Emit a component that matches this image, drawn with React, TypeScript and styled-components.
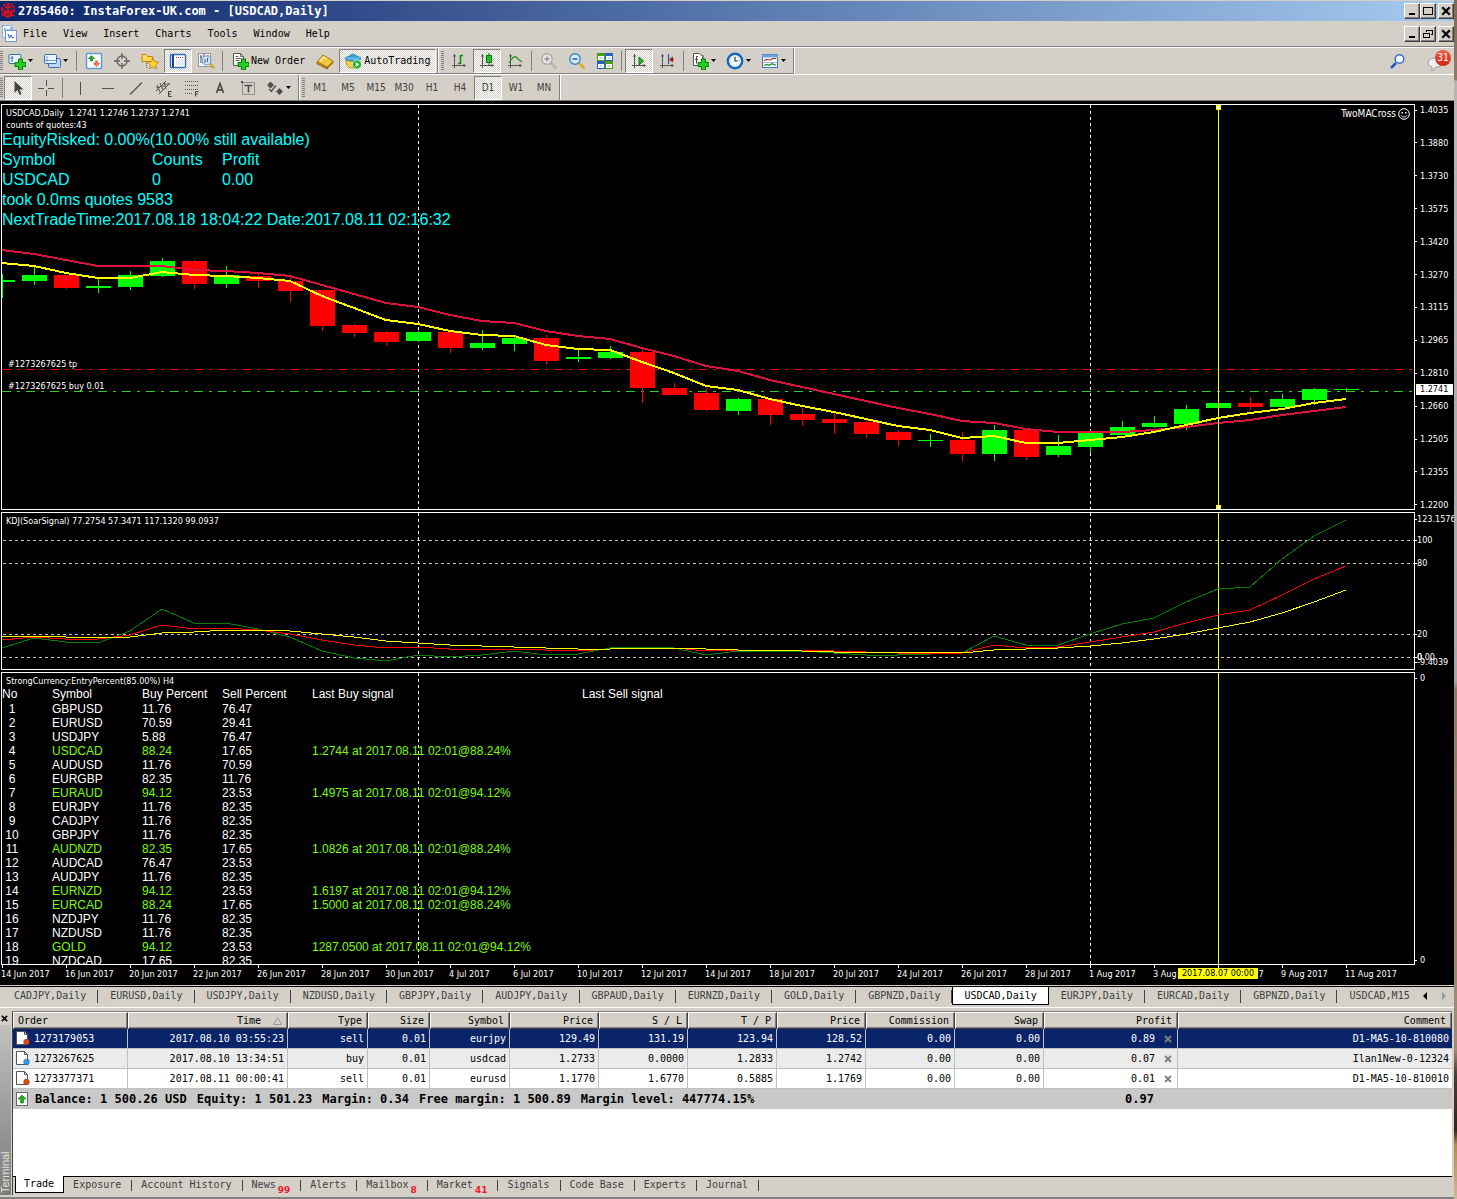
import React from "react";
import styled, { createGlobalStyle, css } from "styled-components";

const FACE = "#d4d0c8";
const MONO = '"DejaVu Sans Mono", "Liberation Mono", monospace';
const SMALL = '"DejaVu Sans Condensed", "DejaVu Sans", sans-serif';
const ARIAL = '"Liberation Sans", Arial, sans-serif';

const GlobalStyle = createGlobalStyle`
  *, *::before, *::after { box-sizing: border-box; }
  body { margin: 0; background: ${FACE}; font: 10px/12px ${MONO}; color: #000; }
  button { margin: 0; padding: 0; border: 0; background: none; font: inherit; color: inherit; cursor: default; }
  svg { display: block; flex: none; }
`;

/* ---------- frame ---------- */

const Desktop = styled.div`
  display: flex;
  min-height: 100vh;
  background: linear-gradient(#7d6a55 0, #8f7c66 80px, #b7b5b3 81px, #a9a7a6 680px, #8d7a64 690px, #a08c72 1050px, #4a3c34 1075px, #33261c 1130px, #b58b4c 1145px, #cdb899 1199px);
`;

const Frame = styled.main`
  display: flex;
  flex: 1;
  min-width: 0;
  flex-direction: column;
  margin-right: 3px;
  padding-top: 1px;
  background: ${FACE};
`;

const TitleBar = styled.header`
  display: flex;
  align-items: center;
  height: 20px;
  background: linear-gradient(90deg, #0a246a, #a6caf0);
`;

const Title = styled.h1`
  flex: 1;
  margin: 0 0 0 2px;
  color: #fff;
  font: bold 12px/20px ${MONO};
`;

const MenuBar = styled.nav`
  display: flex;
  align-items: center;
  height: 26px;
  border-bottom: 1px solid #808080;
`;

const MenuItem = styled.button`
  padding: 0 8px;
`;

const MenuIcon = styled.span`
  padding-left: 1px;
  margin-right: -2px;
`;

const Spring = styled.span`
  flex: 1;
`;

const WinButtons = styled.div`
  display: flex;
`;

const WinButton = styled.button<{ $gap?: boolean }>`
  display: flex;
  align-items: center;
  justify-content: center;
  width: 16px;
  height: 16px;
  margin-left: ${(p) => (p.$gap ? 2 : 0)}px;
  background: ${FACE};
  border: 1px solid;
  border-color: #fff #404040 #404040 #fff;
  box-shadow: inset -1px -1px 0 #808080;
`;

/* ---------- toolbars ---------- */

const ToolRow = styled.div<{ $last?: boolean }>`
  display: flex;
  height: 27px;
  border-top: 1px solid #fff;
  ${(p) => p.$last && css`
    border-bottom: 1px solid #808080;
  `}
`;

const ToolBar = styled.div<{ $under?: boolean }>`
  display: flex;
  align-items: center;
  padding-right: 1px;
  border-right: 1px solid #808080;
  border-bottom: ${(p) => (p.$under ? "1px solid #808080" : "0")};
  box-shadow: 1px 0 0 #fff;
  & + & { padding-left: 3px; }
`;

const Grip = styled.span`
  width: 3px;
  height: 19px;
  margin-right: 1px;
  background: repeating-linear-gradient(#808080 0 1px, ${FACE} 1px 2px);
`;

const Divider = styled.span`
  width: 1px;
  height: 20px;
  margin: 0 3px 0 2px;
  background: #808080;
`;

const pressed = css`
  border-color: #808080 #fff #fff #808080;
  background: conic-gradient(#fff 25%, ${FACE} 0 50%, #fff 0 75%, ${FACE} 0) 0 0 / 2px 2px;
`;

const Tool = styled.button<{ $wide?: boolean; $pressed?: boolean }>`
  display: flex;
  align-items: center;
  justify-content: ${(p) => (p.$wide ? "flex-start" : "center")};
  gap: 2px;
  width: ${(p) => (p.$wide ? 35 : 28)}px;
  height: 24px;
  padding-left: ${(p) => (p.$wide ? 3 : 0)}px;
  border: 1px solid transparent;
  font: 10px/12px ${SMALL};
  color: #404040;
  ${(p) => p.$pressed && pressed}
`;

const TextTool = styled.button<{ $pressed?: boolean }>`
  display: flex;
  align-items: center;
  gap: 2px;
  height: 24px;
  padding: 0 5px 0 4px;
  border: 1px solid transparent;
  ${(p) => p.$pressed && pressed}
`;

const AlertTools = styled.div`
  display: flex;
  align-items: center;
  gap: 14px;
  margin-left: auto;
  padding-right: 3px;
`;

const AlertButton = styled.button`
  position: relative;
  width: 24px;
  height: 24px;
`;

const AlertCount = styled.span`
  position: absolute;
  top: 1px;
  right: 0;
  width: 16px;
  height: 16px;
  border-radius: 8px;
  background: linear-gradient(#e8604a, #d82010);
  color: #fff;
  font: 10px/16px ${SMALL};
  text-align: center;
`;

/* ---------- chart ---------- */

const ChartArea = styled.section`
  display: flex;
  flex-direction: column;
  gap: 2px;
  padding: 3px 0 0 1px;
  background: #000;
  color: #fff;
  font: 9px/12px ${SMALL};
`;

const PaneRow = styled.div<{ $h: number }>`
  display: flex;
  height: ${(p) => p.$h}px;
`;

const Pane = styled.div`
  display: grid;
  flex: 1;
  min-width: 0;
  border: 1px solid #fff;
  overflow: hidden;
  > * { grid-area: 1 / 1; min-width: 0; min-height: 0; }
`;

const Plot = styled.svg`
  width: 100%;
  height: 100%;
  shape-rendering: crispEdges;
`;

const Overlay = styled.div`
  display: flex;
  flex-direction: column;
  align-items: flex-start;
  overflow: hidden;
  white-space: pre;
`;

const PaneNote = styled.div`
  padding: 2px 0 0 4px;
  & + & { padding-top: 0; }
`;

const Cyan = styled.div`
  display: grid;
  grid-template-columns: 150px 70px auto;
  margin-top: -1px;
  font: 16px/20px ${ARIAL};
  color: #00ffff;
`;

const CyanLine = styled.span`
  grid-column: 1 / -1;
`;

const ExpertName = styled.div`
  display: flex;
  align-items: center;
  gap: 2px;
  justify-self: end;
  align-self: start;
  padding: 3px 4px 0 0;
  font-size: 10px;
`;

const OrderNotes = styled.div`
  display: flex;
  flex-direction: column;
  gap: 10px;
  align-self: end;
  padding: 0 0 117px 6px;
`;

const Axis = styled.div`
  position: relative;
  display: flex;
  flex-direction: column;
  justify-content: space-between;
  width: 39px;
  padding-top: 1px;
  overflow: hidden;
  line-height: 10px;
`;

const Tick = styled.div`
  display: flex;
  align-items: center;
  gap: 3px;
  &::before { content: ""; width: 2px; height: 1px; background: #fff; }
`;

const FloatTick = styled(Tick)`
  position: absolute;
  left: 0;
  gap: 0;
`;

const PriceTag = styled.div`
  position: absolute;
  left: 1px;
  width: 37px;
  height: 11px;
  padding-left: 4px;
  background: #fff;
  color: #000;
  line-height: 11px;
`;

const DateAxis = styled.div`
  position: relative;
  display: flex;
  height: 20px;
  margin-top: -2px;
  overflow: hidden;
`;

const DateCell = styled.div`
  flex: none;
  width: 64px;
  white-space: nowrap;
  &::before { content: ""; display: block; width: 1px; height: 3px; margin-left: 1px; background: #fff; }
`;

const DateTag = styled.div`
  position: absolute;
  top: 3px;
  left: 1177px;
  width: 80px;
  height: 11px;
  background: #ff0;
  color: #000;
  line-height: 11px;
  text-align: center;
  white-space: nowrap;
`;

const SignalTable = styled.table`
  table-layout: fixed;
  width: 850px;
  border-collapse: collapse;
  font: 12px/14px ${ARIAL};
  th, td { padding: 0; font-weight: normal; text-align: left; }
  th { line-height: 15px; }
`;

const SignalRow = styled.tr<{ $hot?: boolean }>`
  color: ${(p) => (p.$hot ? "#7cfc00" : "#fff")};
  td:first-child { width: 20px; padding-right: 30px; text-align: center; color: #fff; }
  td:nth-child(4) { color: #fff; }
`;

/* ---------- chart tabs ---------- */

const ChartTabs = styled.nav`
  display: flex;
  height: 22px;
  padding-left: 2px;
  margin-top: 1px;
  border-top: 1px solid #000;
  border-bottom: 1px solid #fff;
  overflow: hidden;
`;

const ChartTab = styled.button<{ $active?: boolean }>`
  position: relative;
  height: 18px;
  padding: 0 12px;
  color: #404040;
  white-space: nowrap;
  &::after { content: ""; position: absolute; right: 0; top: 3px; width: 1px; height: 13px; background: #404040; }
  &:last-of-type::after { display: none; }
  ${(p) => p.$active && css`
    margin-top: -1px;
    height: 19px;
    padding: 0 11px;
    border: 1px solid #000;
    border-top-color: #fff;
    background: #fff;
    color: #000;
    &::after { display: none; }
  `}
`;

const TabScroll = styled.div`
  display: flex;
  align-items: center;
  gap: 13px;
  height: 17px;
  margin-left: auto;
  padding-right: 7px;
`;

/* ---------- terminal ---------- */

const Terminal = styled.section`
  display: flex;
  flex: 1;
  min-height: 187px;
  margin-top: 3px;
  padding: 0 2px 2px 0;
  border-bottom: 2px solid #808080;
`;

const SideBar = styled.div`
  display: flex;
  flex-direction: column;
  align-items: center;
  width: 12px;
`;

const SideClose = styled.button`
  width: 12px;
  height: 14px;
  padding: 2px 0 2px 1px;
`;

const SideTitle = styled.h2`
  flex: 1;
  width: 11px;
  margin: 0 1px 0 0;
  padding-top: 2px;
  background: linear-gradient(#7c7c7c, #c0c0c0);
  color: #e4e1da;
  font: 11px/11px ${ARIAL};
  writing-mode: vertical-rl;
  transform: rotate(180deg);
`;

const TermBody = styled.div`
  display: flex;
  flex: 1;
  flex-direction: column;
  min-width: 0;
  border-top: 1px solid #808080;
  border-left: 1px solid #404040;
  background: #fff;
`;

const Orders = styled.table`
  width: 100%;
  table-layout: fixed;
  border-collapse: separate;
  border-spacing: 0;
  th, td { padding: 0 3px; text-align: right; white-space: nowrap; }
`;

const HeadCell = styled.th`
  height: 17px;
  background: ${FACE};
  border: 1px solid;
  border-color: #fff #404040 #404040 #fff;
  box-shadow: inset -1px -1px 0 #808080;
  font-weight: normal;
  && { padding-right: 5px; }
  &&:first-child { text-align: left; padding-left: 4px; }
`;

const HeadFlex = styled.span`
  display: flex;
  align-items: center;
  justify-content: flex-end;
  gap: 12px;
`;

const OrderRow = styled.tr<{ $tone: string }>`
  background: ${(p) => p.$tone};
  color: ${(p) => (p.$tone === "#0a246a" ? "#fff" : "#000")};
  td { height: 20px; border-right: 1px solid #c0c0c0; border-bottom: 1px solid #c0c0c0; }
  td:last-child { border-right: 0; }
`;

const IconText = styled.span`
  display: flex;
  align-items: center;
  gap: 4px;
`;

const ProfitCell = styled.span`
  display: flex;
  align-items: center;
  justify-content: flex-end;
  gap: 9px;
  padding-right: 2px;
`;

const Summary = styled.tr`
  background: #c8c8c8;
  font: bold 12px/20px ${MONO};
  td { height: 20px; }
  td:nth-child(2) { padding-right: 24px; }
`;

const SummaryItems = styled.span`
  display: flex;
  align-items: center;
  gap: 10px;
  svg { margin-right: -3px; }
`;

const TermTabs = styled.nav`
  display: flex;
  height: 19px;
  margin-top: auto;
  padding-left: 2px;
  border-top: 1px solid #000;
  background: ${FACE};
`;

const TermTab = styled.button<{ $active?: boolean }>`
  position: relative;
  display: flex;
  align-items: center;
  height: 16px;
  padding: 0 11px 0 9px;
  color: #404040;
  white-space: nowrap;
  &::after { content: ""; position: absolute; right: 0; top: 3px; width: 1px; height: 11px; background: #404040; }
  ${(p) => p.$active && css`
    margin-top: -1px;
    height: 17px;
    padding: 0 9px 0 8px;
    border: 1px solid #000;
    border-top: 0;
    background: #fff;
    color: #000;
    &::after { display: none; }
  `}
`;

const Badge = styled.sub`
  align-self: flex-end;
  margin: 0 0 -2px 2px;
  color: #f01828;
  font: bold 9px/10px "DejaVu Sans", sans-serif;
`;

/* ---------- icons ---------- */

const axes = <path d="M4.500 2v14M2 13.500h14M3 4h3M14 12v3" stroke="#555" fill="none" />;
const glass = (ring: string, fill: string, handle: string) => (
  <>
    <path d="M10.500 10.500l5 5" stroke={handle} strokeWidth="3" strokeLinecap="round" />
    <circle cx="7" cy="7" r="5.200" fill={fill} stroke={ring} strokeWidth="1.400" />
  </>
);
const addMark = <path d="M7 10.500h3.500v-3.500h4v3.500h3.500v4h-3.500v3.500h-4v-3.500h-3.500z" fill="#1fd01f" stroke="#0a7a0a" />;

const icons: Record<string, React.ReactNode> = {
  newChart: <><rect x="1" y="2.500" width="12" height="9" rx="1" fill="#eaf4ff" stroke="#3b6fa8" /><path d="M4 4v6M2.500 6h3" stroke="#3b6fa8" />{addMark}</>,
  profiles: <><rect x="5.500" y="6.500" width="12" height="9" rx="1" fill="#bcd8f4" stroke="#3b6fa8" /><rect x="1.500" y="2.500" width="12" height="9" rx="1" fill="#eaf4ff" stroke="#3b6fa8" /><path d="M4 4v6M2 8.500h11" stroke="#7aa2cc" /></>,
  market: <><rect x="1.500" y="1.500" width="15" height="15" rx="1" fill="#fff" stroke="#5b9bd8" strokeWidth="1.500" /><path d="M6.500 3.500l3 3h-2v2.500h-2v-2.500h-2z" fill="#1fae1f" stroke="#0a7a0a" strokeWidth=".6" /><path d="M11.500 14.500l3-3h-2v-2.500h-2v2.500h-2z" fill="#ff7a45" stroke="#c03a10" strokeWidth=".6" /></>,
  target: <g fill="none" stroke="#606060" strokeWidth="1.300"><circle cx="9" cy="9" r="5" /><path d="M9 1v6M9 11v6M1 9h6M11 9h6" /></g>,
  navigator: <><path d="M1 2.500h4l1.500 2h5v5h-10.500z" fill="#ffd95a" stroke="#b8860b" /><path d="M5.500 11v5" stroke="#555" strokeDasharray="1 1" /><path d="M12 6l1.700 3.600 4 .5-3 2.700.8 4-3.500-2-3.500 2 .8-4-3-2.700 4-.5z" fill="#ffd430" stroke="#b8780b" strokeWidth=".8" /></>,
  terminal: <><rect x="1.500" y="2.500" width="15" height="13" rx="1" fill="#fff" stroke="#2c6cb8" strokeWidth="1.400" /><path d="M4 3v12" stroke="#14468c" strokeWidth="2" /><path d="M7 5.500h8" stroke="#e03020" strokeDasharray="1 1" /><path d="M7 8h8M7 10h8M7 12h8" stroke="#cfd8ea" /></>,
  tester: <><rect x="1.500" y="1.500" width="12" height="13" fill="#f4f4f4" stroke="#999" /><path d="M4 3v8M7 2v4M11 3v4M3 5h2" stroke="#557" /><path d="M13 12l4 4" stroke="#d9a520" strokeWidth="2.500" /><circle cx="9.500" cy="8.500" r="4.500" fill="#cfe6fa" stroke="#6c9cc8" strokeWidth="1.200" /><path d="M8 7v4M10.500 6v4" stroke="#557" /></>,
  newOrder: <><path d="M2.500 1.500h7l3 3v9h-10z" fill="#fff" stroke="#555" /><path d="M9.500 1.500v3h3M4.500 4.500h3M4.500 6.500h6M4.500 8.500h4" fill="none" stroke="#666" />{addMark}</>,
  metaEditor: <><path d="M1 10l6-7 10 6-6 6z" fill="#f3c840" stroke="#a8740c" /><path d="M1 10v2l10 5v-2zM11 15v2l6-6v-2" fill="#c98e18" stroke="#8a5c0c" strokeWidth=".7" /><path d="M4 9l4-4 3 2" fill="none" stroke="#fff3b0" strokeWidth="1.300" /></>,
  auto: <><path d="M2 8c0 7 3 8 7 8s6-2 6-5z" fill="#f5cf48" stroke="#a8800c" strokeWidth=".8" /><path d="M5 6c0-5 8-5 8 0z" fill="#58b4ea" stroke="#2078b0" strokeWidth=".8" /><ellipse cx="9" cy="6.500" rx="8" ry="2.500" fill="#58b4ea" stroke="#2078b0" strokeWidth=".8" /><circle cx="13" cy="12.500" r="4.500" fill="#22b033" stroke="#fff" strokeWidth=".6" /><path d="M11.700 10v5l3.600-2.500z" fill="#fff" /></>,
  bars: <>{axes}<path d="M10.500 3v9M10.500 3.500h2.500M8 11.500h2.500" stroke="#128a12" strokeWidth="1.600" /></>,
  candles: <>{axes}<path d="M11 1v12" stroke="#0a7a0a" /><rect x="8.500" y="3.500" width="5" height="7" fill="#25c225" stroke="#0a7a0a" /></>,
  line: <>{axes}<path d="M3 11c4-7 7-8 9-4l4 3" fill="none" stroke="#2a9a2a" strokeWidth="1.400" /></>,
  zoomIn: <>{glass("#a8a8a8", "#e8e8e8", "#b8b8b8")}<path d="M4.500 7h5M7 4.500v5" stroke="#909090" strokeWidth="1.500" /></>,
  zoomOut: <>{glass("#3a84c8", "#d4ecfc", "#dcb030")}<path d="M4.500 7h5" stroke="#2060a0" strokeWidth="1.500" /></>,
  tile: <><rect x="1" y="1" width="8" height="8" fill="#4a9c10" /><rect x="9" y="1" width="8" height="8" fill="#2c5cc8" /><rect x="1" y="9" width="8" height="8" fill="#2c5cc8" /><rect x="9" y="9" width="8" height="8" fill="#4a9c10" /><path d="M2 4h6v4h-6zM10 4h6v4h-6zM2 12h6v4h-6zM10 12h6v4h-6z" fill="#fff" /><path d="M3.500 6h3M11.500 6h3M3.500 14h3M11.500 14h3" stroke="#9ab" /></>,
  scroll: <>{axes}<path d="M9 5v8l4.500-4z" fill="#22b022" stroke="#0a7a0a" /></>,
  shift: <>{axes}<path d="M10.500 2v10" stroke="#2060b0" strokeWidth="1.300" /><path d="M12 7.500h4M14.500 5l-3 2.500 3 2.500z" fill="#d03a10" stroke="#a02a08" /></>,
  indicators: <><path d="M4.500 3.500h8v10h-8z" fill="#fff" stroke="#888" /><path d="M2.500 1.500h6l3 3v9h-9z" fill="#fff" stroke="#555" /><path d="M7 4.500h-1.500v7M4 7.500h3" stroke="#444" fill="none" />{addMark}</>,
  periods: <><circle cx="9" cy="9" r="7.200" fill="#f4faff" stroke="#1468c0" strokeWidth="2.400" /><circle cx="9" cy="9" r="4.500" fill="none" stroke="#99b4cc" strokeDasharray="1 1.600" /><path d="M9 5v4h3" fill="none" stroke="#333" strokeWidth="1.200" /></>,
  templates: <><rect x="1.500" y="2.500" width="15" height="13" fill="#fff" stroke="#3b78b8" /><path d="M1 4h16" stroke="#6aa4dc" strokeWidth="3" /><path d="M3 8.500l3-1 3 .5 3-1.500h3" fill="none" stroke="#a02818" strokeWidth="1.200" /><path d="M2 10.500h14" stroke="#9ab8d8" /><path d="M3 13.500l3-1 2 .8 3-1.600 4 1.600" fill="none" stroke="#1a8a2a" strokeWidth="1.200" /></>,
  cursor: <path d="M5.500 2v12l3-3 2 5 2-1-2-4.500h4z" fill="#444" />,
  cross: <path d="M9.500 1v6M9.500 11v6M1 9.500h6M11 9.500h6" stroke="#505050" />,
  vline: <path d="M9.500 3v13" stroke="#505050" />,
  hline: <path d="M3 9.500h12" stroke="#505050" />,
  trend: <path d="M3 15.500l12-12" stroke="#505050" strokeWidth="1.200" />,
  channel: <><path d="M1 12l10-10M4 15l11-11M2 6l3 7M5 4l3 7M9 3l2 7M1 9l4-1M6 7h4M10 5h5" stroke="#505050" fill="none" /><path d="M16.500 12.500h-3v5h3M13.500 15h2.500" stroke="#404040" fill="none" /></>,
  fibo: <><path d="M2 2.500h13M2 6.500h13M2 10.500h13M2 14.500h8" stroke="#505050" strokeDasharray="1 1" /><path d="M15.500 12.500h-3v5M12.500 15h2.500" stroke="#404040" fill="none" /></>,
  text: <path d="M5.500 14l3.500-9.500 3.500 9.500M6.800 11h4.500" fill="none" stroke="#505050" strokeWidth="1.800" />,
  label: <><rect x="3.500" y="3.500" width="12" height="12" fill="none" stroke="#505050" strokeDasharray="1 1" /><path d="M5.500 6.500h8M9.500 6.500v7" stroke="#505050" strokeWidth="1.700" /><rect x="2" y="2" width="2" height="2" fill="#505050" /></>,
  shapes: <><path d="M1 6l3.500-3.500 3.500 3.500-3.500 3.500zM10 12.500l3.500-3.500 3.500 3.500-3.500 3.500z" fill="#505050" /><path d="M3 10l3 3M5 12.500l5-6" stroke="#505050" strokeWidth="1.300" /></>,
  search: <><path d="M7 11l-5 5" stroke="#2858c0" strokeWidth="2.500" /><circle cx="10.500" cy="7" r="4.300" fill="#f4f8ff" stroke="#3a6cd0" strokeWidth="1.500" /></>,
};

const Icon = ({ name }: { name: string }) => (
  <svg width="18" height="18" viewBox="0 0 18 18" aria-hidden="true">{icons[name]}</svg>
);

const Caret = () => (
  <svg width="5" height="3" viewBox="0 0 5 3" aria-hidden="true"><path d="M0 0h5l-2.500 3z" fill="#000" /></svg>
);

const Cross = ({ color = "#000", size = 8 }: { color?: string; size?: number }) => (
  <svg width={size} height={size} viewBox="0 0 8 8" aria-hidden="true"><path d="M1 1l6 6M7 1l-6 6" stroke={color} strokeWidth="1.900" /></svg>
);

const Logo = () => (
  <svg width="16" height="18" viewBox="0 0 16 18" aria-hidden="true">
    <g fill="none" stroke="#f01010" strokeWidth="1.500">
      <path d="M8 1v15M3 4l2-1.500M13 4l-2-1.500M1 8h3M15 8h-3M2 14l3-2M14 14l-3-2M4.500 6.500c2-3 5-3 7 0M4 9c0 3 2 3 2 6M12 9c0 3-2 3-2 6M6 8v4M10 8v4" />
      <circle cx="8" cy="8" r="6.500" strokeWidth="1.200" strokeDasharray="3 2" />
    </g>
  </svg>
);

const DocLogo = () => (
  <svg width="16" height="19" viewBox="0 0 16 19" aria-hidden="true">
    <rect x="1.500" y="1.500" width="10" height="12" fill="#eef5ff" stroke="#6a9ae0" strokeDasharray="2 1" />
    <path d="M4 7v-3M7 5v4M10 3v4" stroke="#3a6ad0" />
    <rect x="4.500" y="6.500" width="11" height="11" fill="#fff" stroke="#6a9ae0" />
    <path d="M7 10l1.500 4 1.500-3 1.500 3 1.500-1" fill="none" stroke="#2a5ad0" />
  </svg>
);

const DocIcon = ({ dot }: { dot: string }) => (
  <svg width="14" height="15" viewBox="0 0 14 15" aria-hidden="true">
    <path d="M.5.5h8l3 3v10h-11z" fill="#fff" stroke="#555" />
    <path d="M8.500.5v3h3" fill="none" stroke="#555" />
    <circle cx="10.500" cy="11" r="3" fill={dot} stroke="#0004" strokeWidth=".7" />
  </svg>
);

/* ---------- data ---------- */

const menus = ["File", "View", "Insert", "Charts", "Tools", "Window", "Help"];
const periods = ["M1", "M5", "M15", "M30", "H1", "H4", "D1", "W1", "MN"];
const prices = ["1.4035", "1.3880", "1.3730", "1.3575", "1.3420", "1.3270", "1.3115", "1.2965", "1.2810", "1.2660", "1.2505", "1.2355", "1.2200"];
const dates = ["14 Jun 2017", "16 Jun 2017", "20 Jun 2017", "22 Jun 2017", "26 Jun 2017", "28 Jun 2017", "30 Jun 2017", "4 Jul 2017", "6 Jul 2017", "10 Jul 2017", "12 Jul 2017", "14 Jul 2017", "18 Jul 2017", "20 Jul 2017", "24 Jul 2017", "26 Jul 2017", "28 Jul 2017", "1 Aug 2017", "3 Aug 2017", "7 Aug 2017", "9 Aug 2017", "11 Aug 2017"];

// [rising, wick top, body top, body bottom, wick bottom]
const candles: [number, number, number, number, number][] = [
  [1, 274, 280, 282, 298], [1, 267, 275, 281, 285], [0, 275, 275, 288, 289], [1, 278, 286, 288, 293], [1, 271, 275, 287, 290],
  [1, 258, 261, 276, 277], [0, 260, 261, 284, 289], [1, 266, 275, 284, 288], [0, 272, 276, 281, 288], [0, 275, 281, 291, 302],
  [0, 290, 290, 326, 331], [0, 324, 325, 333, 337], [0, 331, 332, 342, 346], [1, 331, 332, 341, 342], [0, 332, 332, 348, 353],
  [1, 330, 343, 348, 350], [1, 337, 338, 344, 351], [0, 335, 338, 361, 365], [1, 349, 357, 359, 362], [1, 346, 352, 358, 359],
  [0, 347, 352, 388, 403], [0, 383, 388, 395, 395], [0, 388, 393, 410, 411], [1, 398, 399, 411, 415], [0, 399, 399, 415, 425],
  [0, 408, 414, 420, 426], [0, 413, 419, 423, 434], [0, 420, 422, 434, 438], [0, 430, 432, 440, 446], [1, 434, 440, 441, 447],
  [0, 432, 440, 454, 461], [1, 425, 430, 454, 461], [0, 430, 430, 457, 460], [1, 435, 446, 455, 457], [1, 430, 433, 447, 453],
  [1, 421, 427, 435, 435], [1, 416, 423, 427, 428], [1, 405, 409, 424, 430], [1, 403, 403, 408, 408], [0, 397, 403, 407, 410],
  [1, 394, 399, 407, 407], [1, 388, 389, 400, 405], [1, 388, 389, 390, 392],
];
const fastMa = [263, 266, 273, 278, 278, 272, 275, 276, 278, 281, 296, 308, 320, 324, 331, 335, 336, 345, 349, 350, 362, 373, 386, 390, 399, 406, 412, 419, 426, 430, 438, 436, 443, 443, 440, 437, 432, 425, 418, 413, 409, 403, 399];
const slowMa = [250, 254, 260, 266, 266, 266, 270, 271, 273, 276, 285, 294, 303, 307, 315, 321, 323, 331, 336, 339, 348, 356, 366, 371, 380, 387, 394, 401, 408, 414, 421, 423, 429, 432, 432, 432, 430, 427, 423, 420, 415, 411, 407];
const kdjJ = [648, 638, 642, 643, 631, 609, 623, 623, 629, 637, 651, 658, 661, 655, 657, 655, 651, 655, 654, 648, 647, 648, 655, 651, 651, 651, 653, 655, 655, 654, 653, 636, 645, 645, 634, 624, 618, 602, 589, 587, 559, 536, 520];
const kdjK = [640, 637, 639, 639, 635, 625, 629, 628, 630, 634, 640, 645, 648, 647, 649, 649, 649, 650, 651, 649, 648, 648, 651, 650, 650, 650, 651, 652, 653, 654, 653, 645, 648, 647, 642, 637, 632, 623, 615, 610, 595, 579, 566];
const kdjD = [636, 636, 637, 638, 637, 633, 632, 630, 630, 631, 634, 637, 641, 643, 645, 646, 647, 648, 649, 649, 648, 648, 649, 650, 650, 651, 652, 652, 652, 652, 653, 650, 649, 648, 646, 643, 639, 634, 628, 622, 613, 602, 590];

const xOf = (i: number) => 2 + i * 32;
const points = (ys: number[]) => ys.map((y, i) => `${xOf(i)},${y}`).join(" ");

const kdjLabels: [string, number][] = [["123.1576", 519], ["100", 540], ["80", 563], ["20", 634], ["0", 657], ["0.00", 657], ["-9.4039", 662]];

const signals: [string, string, string, string?][] = [
  ["GBPUSD", "11.76", "76.47"], ["EURUSD", "70.59", "29.41"], ["USDJPY", "5.88", "76.47"],
  ["USDCAD", "88.24", "17.65", "1.2744 at 2017.08.11 02:01@88.24%"],
  ["AUDUSD", "11.76", "70.59"], ["EURGBP", "82.35", "11.76"],
  ["EURAUD", "94.12", "23.53", "1.4975 at 2017.08.11 02:01@94.12%"],
  ["EURJPY", "11.76", "82.35"], ["CADJPY", "11.76", "82.35"], ["GBPJPY", "11.76", "82.35"],
  ["AUDNZD", "82.35", "17.65", "1.0826 at 2017.08.11 02:01@88.24%"],
  ["AUDCAD", "76.47", "23.53"], ["AUDJPY", "11.76", "82.35"],
  ["EURNZD", "94.12", "23.53", "1.6197 at 2017.08.11 02:01@94.12%"],
  ["EURCAD", "88.24", "17.65", "1.5000 at 2017.08.11 02:01@88.24%"],
  ["NZDJPY", "11.76", "82.35"], ["NZDUSD", "11.76", "82.35"],
  ["GOLD", "94.12", "23.53", "1287.0500 at 2017.08.11 02:01@94.12%"],
  ["NZDCAD", "17.65", "82.35"],
];

const chartTabs = ["CADJPY,Daily", "EURUSD,Daily", "USDJPY,Daily", "NZDUSD,Daily", "GBPJPY,Daily", "AUDJPY,Daily", "GBPAUD,Daily", "EURNZD,Daily", "GOLD,Daily", "GBPNZD,Daily", "USDCAD,Daily", "EURJPY,Daily", "EURCAD,Daily", "GBPNZD,Daily", "USDCAD,M15"];

const columns: [string, number?][] = [["Order", 115], ["Time", 160], ["Type", 80], ["Size", 62], ["Symbol", 80], ["Price", 89], ["S / L", 89], ["T / P", 89], ["Price", 89], ["Commission", 89], ["Swap", 89], ["Profit", 134], ["Comment"]];
const orders = [
  { tone: "#0a246a", dot: "#e04818", cells: ["1273179053", "2017.08.10 03:55:23", "sell", "0.01", "eurjpy", "129.49", "131.19", "123.94", "128.52", "0.00", "0.00", "0.89", "D1-MA5-10-810080"] },
  { tone: "#ebebeb", dot: "#2a98e8", cells: ["1273267625", "2017.08.10 13:34:51", "buy", "0.01", "usdcad", "1.2733", "0.0000", "1.2833", "1.2742", "0.00", "0.00", "0.07", "Ilan1New-0-12324"] },
  { tone: "#ffffff", dot: "#e04818", cells: ["1273377371", "2017.08.11 00:00:41", "sell", "0.01", "eurusd", "1.1770", "1.6770", "0.5885", "1.1769", "0.00", "0.00", "0.01", "D1-MA5-10-810010"] },
];
const summary = ["Balance: 1 500.26 USD", "Equity: 1 501.23", "Margin: 0.34", "Free margin: 1 500.89", "Margin level: 447774.15%"];
const termTabs: [string, string?][] = [["Trade"], ["Exposure"], ["Account History"], ["News", "99"], ["Alerts"], ["Mailbox", "8"], ["Market", "41"], ["Signals"], ["Code Base"], ["Experts"], ["Journal"]];

/* ---------- parts ---------- */

const ToolButton = ({ name, wide, on }: { name: string; wide?: boolean; on?: boolean }) => (
  <Tool aria-label={name} $wide={wide} $pressed={on}>
    <Icon name={name} />
    {wide && <Caret />}
  </Tool>
);

const WindowControls = ({ restore }: { restore?: boolean }) => (
  <WinButtons>
    <WinButton aria-label="Minimize">
      <svg width="10" height="10" viewBox="0 0 10 10"><path d="M2 8h6" stroke="#000" strokeWidth="2" /></svg>
    </WinButton>
    <WinButton aria-label={restore ? "Restore" : "Maximize"}>
      <svg width="10" height="10" viewBox="0 0 10 10" shapeRendering="crispEdges">
        {restore
          ? <path d="M3.500 3v-2h6v4h-2M3 1.500h7M.5 4.500h6v4h-6zM0 4h7" fill="none" stroke="#000" />
          : <path d="M.5 1.500h9v7h-9zM0 1h10" fill="none" stroke="#000" />}
      </svg>
    </WinButton>
    <WinButton aria-label="Close" $gap><Cross size={10} /></WinButton>
  </WinButtons>
);

const Guides = ({ top, bottom }: { top: number; bottom: number }) => (
  <>
    <path d={`M418.500 ${top}V${bottom}M1090.500 ${top}V${bottom}`} stroke="#fff" strokeDasharray="3 3" />
    <path d={`M1218.500 ${top}V${bottom}`} stroke="#ff0" />
  </>
);

const PricePane = () => (
  <PaneRow $h={406}>
    <Pane>
      <Plot role="img" aria-label="USDCAD daily candles">
        <g transform="translate(-2 -105)">
          <path d="M2 369.500H1414" stroke="#f00" strokeDasharray="9 6 3 6" />
          <path d="M2 391.500H1414" stroke="#32cd32" strokeDasharray="9 6 3 6" />
          <path d="M418.500 105V509M1090.500 105V509" stroke="#fff" strokeDasharray="3 3" />
          {candles.map(([up, high, top, bottom, low], i) => (
            <g key={i} fill={up ? "#0f0" : "#f00"}>
              <rect x={xOf(i)} y={high} width="1" height={low - high} />
              <rect x={xOf(i) - 12} y={top} width="25" height={bottom - top} />
            </g>
          ))}
          <polyline points={points(slowMa)} fill="none" stroke="#dc143c" strokeWidth="2" />
          <polyline points={points(fastMa)} fill="none" stroke="#ff0" strokeWidth="2" />
          <path d="M1218.500 105V509" stroke="#ff0" />
          <path d="M1216 105h5v5h-5zM1216 505h5v5h-5z" fill="#ff0" />
          <path d="M1217 106h3v3h-3zM1217 506h3v3h-3z" fill="#fff" />
        </g>
      </Plot>
      <Overlay>
        <PaneNote>USDCAD,Daily  1.2741 1.2746 1.2737 1.2741</PaneNote>
        <PaneNote>counts of quotes:43</PaneNote>
        <Cyan>
          <CyanLine>EquityRisked: 0.00%(10.00% still available)</CyanLine>
          <span>Symbol</span><span>Counts</span><span>Profit</span>
          <span>USDCAD</span><span>0</span><span>0.00</span>
          <CyanLine>took 0.0ms quotes 9583</CyanLine>
          <CyanLine>NextTradeTime:2017.08.18 18:04:22 Date:2017.08.11 02:16:32</CyanLine>
        </Cyan>
      </Overlay>
      <OrderNotes>
        <span>#1273267625 tp</span>
        <span>#1273267625 buy 0.01</span>
      </OrderNotes>
      <ExpertName>
        TwoMACross
        <svg width="12" height="12" viewBox="0 0 12 12" aria-hidden="true">
          <circle cx="6" cy="6" r="5.300" fill="none" stroke="#fff" />
          <path d="M3.500 4h1.500v1.500h-1.500zM7 4h1.500v1.500h-1.500z" fill="#fff" />
          <path d="M3 7.500c1.500 2 4.500 2 6 0" fill="none" stroke="#fff" />
        </svg>
      </ExpertName>
    </Pane>
    <Axis>
      {prices.map((p) => <Tick key={p}>{p}</Tick>)}
      <PriceTag style={{ top: 384 - 104 }}>1.2741</PriceTag>
    </Axis>
  </PaneRow>
);

const KdjPane = () => (
  <PaneRow $h={158}>
    <Pane>
      <Plot role="img" aria-label="KDJ indicator">
        <g transform="translate(-2 -513)" fill="none">
          <path d="M3 540.500H1414M3 563.500H1414M3 634.500H1414M3 657.500H1414" stroke="#c0c0c0" strokeDasharray="3 3" />
          <Guides top={513} bottom={670} />
          <polyline points={points(kdjJ)} stroke="#008000" />
          <polyline points={points(kdjK)} stroke="#f00" />
          <polyline points={points(kdjD)} stroke="#ff0" />
        </g>
      </Plot>
      <Overlay><PaneNote>KDJ(SoarSignal) 77.2754 57.3471 117.1320 99.0937</PaneNote></Overlay>
    </Pane>
    <Axis>
      {kdjLabels.map(([label, y]) => <FloatTick key={label} style={{ top: y - 517 }}>{label}</FloatTick>)}
    </Axis>
  </PaneRow>
);

const StrongPane = () => (
  <PaneRow $h={293}>
    <Pane>
      <Plot aria-hidden="true"><g transform="translate(-2 -673)"><Guides top={673} bottom={965} /></g></Plot>
      <Overlay>
        <PaneNote>StrongCurrency:EntryPercent(85.00%) H4</PaneNote>
        <SignalTable>
          <colgroup>{[50, 90, 80, 90, 270, 270].map((w, i) => <col key={i} width={w} />)}</colgroup>
          <thead>
            <tr><th>No</th><th>Symbol</th><th>Buy Percent</th><th>Sell Percent</th><th>Last Buy signal</th><th>Last Sell signal</th></tr>
          </thead>
          <tbody>
            {signals.map(([symbol, buy, sell, last], i) => (
              <SignalRow key={symbol} $hot={!!last}>
                <td>{i + 1}</td><td>{symbol}</td><td>{buy}</td><td>{sell}</td><td>{last}</td><td />
              </SignalRow>
            ))}
          </tbody>
        </SignalTable>
      </Overlay>
    </Pane>
    <Axis><Tick>0</Tick><Tick>0</Tick></Axis>
  </PaneRow>
);

export default function App() {
  return (
    <Desktop>
      <GlobalStyle />
      <Frame>
        <TitleBar>
          <Logo />
          <Title>2785460: InstaForex-UK.com - [USDCAD,Daily]</Title>
          <WindowControls />
        </TitleBar>
        <MenuBar>
          <MenuIcon><DocLogo /></MenuIcon>
          {menus.map((m) => <MenuItem key={m}>{m}</MenuItem>)}
          <Spring />
          <WindowControls restore />
        </MenuBar>

        <ToolRow>
          <ToolBar $under>
            <Grip />
            <ToolButton name="newChart" wide /><ToolButton name="profiles" wide />
            <Divider />
            <ToolButton name="market" /><ToolButton name="target" /><ToolButton name="navigator" />
            <ToolButton name="terminal" on /><ToolButton name="tester" />
            <Divider />
            <TextTool><Icon name="newOrder" />New Order</TextTool>
            <ToolButton name="metaEditor" />
            <TextTool $pressed><Icon name="auto" />AutoTrading</TextTool>
          </ToolBar>
          <ToolBar $under>
            <Grip />
            <ToolButton name="bars" /><ToolButton name="candles" on /><ToolButton name="line" />
            <Divider />
            <ToolButton name="zoomIn" /><ToolButton name="zoomOut" /><ToolButton name="tile" />
            <Divider />
            <ToolButton name="scroll" on /><ToolButton name="shift" />
            <Divider />
            <ToolButton name="indicators" wide /><ToolButton name="periods" wide /><ToolButton name="templates" wide />
          </ToolBar>
          <AlertTools>
            <AlertButton aria-label="Search"><Icon name="search" /></AlertButton>
            <AlertButton aria-label="Notifications">
              <svg width="24" height="24" viewBox="0 0 24 24" aria-hidden="true">
                <path d="M8 9c-8 0-9 8-3 9v4l4-4c9 0 9-9-1-9z" fill="#eef0f4" stroke="#999" />
              </svg>
              <AlertCount>31</AlertCount>
            </AlertButton>
          </AlertTools>
        </ToolRow>
        <ToolRow $last>
          <ToolBar>
            <Grip />
            <ToolButton name="cursor" on /><ToolButton name="cross" />
            <Divider />
            <ToolButton name="vline" /><ToolButton name="hline" /><ToolButton name="trend" /><ToolButton name="channel" />
            <ToolButton name="fibo" /><ToolButton name="text" /><ToolButton name="label" /><ToolButton name="shapes" wide />
          </ToolBar>
          <ToolBar>
            <Grip />
            {periods.map((p) => <Tool key={p} $pressed={p === "D1"}>{p}</Tool>)}
          </ToolBar>
        </ToolRow>

        <ChartArea>
          <PricePane />
          <KdjPane />
          <StrongPane />
          <DateAxis>
            {dates.map((d) => <DateCell key={d}>{d}</DateCell>)}
            <DateTag>2017.08.07 00:00</DateTag>
          </DateAxis>
        </ChartArea>

        <ChartTabs>
          {chartTabs.map((t, i) => <ChartTab key={i} $active={t === "USDCAD,Daily"}>{t}</ChartTab>)}
          <TabScroll>
            <button aria-label="Scroll left"><svg width="6" height="8" viewBox="0 0 6 8"><path d="M5 0v8l-4-4z" /></svg></button>
            <button aria-label="Scroll right"><svg width="6" height="8" viewBox="0 0 6 8"><path d="M1 0v8l4-4z" fill="#999" /></svg></button>
          </TabScroll>
        </ChartTabs>

        <Terminal>
          <SideBar>
            <SideClose aria-label="Close terminal"><Cross size={7} /></SideClose>
            <SideTitle>Terminal</SideTitle>
          </SideBar>
          <TermBody>
            <Orders>
              <colgroup>{columns.map(([, w], i) => <col key={i} width={w} />)}</colgroup>
              <thead>
                <tr>
                  {columns.map(([label], i) => (
                    <HeadCell key={i} scope="col">
                      {label === "Time"
                        ? <HeadFlex>Time<svg width="9" height="8" viewBox="0 0 9 8" aria-hidden="true"><path d="M.5 7.500l4-7 4 7z" fill="none" stroke="#999" /></svg></HeadFlex>
                        : label}
                    </HeadCell>
                  ))}
                </tr>
              </thead>
              <tbody>
                {orders.map((o) => (
                  <OrderRow key={o.cells[0]} $tone={o.tone}>
                    {o.cells.map((c, i) => (
                      <td key={i}>
                        {i === 0 ? <IconText><DocIcon dot={o.dot} />{c}</IconText>
                          : i === 11 ? <ProfitCell>{c}<button aria-label="Close order"><Cross color="#808080" /></button></ProfitCell>
                          : c}
                      </td>
                    ))}
                  </OrderRow>
                ))}
              </tbody>
              <tfoot>
                <Summary>
                  <td colSpan={11}>
                    <SummaryItems>
                      <svg width="12" height="14" viewBox="0 0 12 14" aria-hidden="true">
                        <rect x=".5" y=".5" width="11" height="13" fill="#fff" stroke="#666" />
                        <path d="M6 3l4 4h-2.500v4h-3v-4h-2.500z" fill="#1fae1f" stroke="#0a7a0a" strokeWidth=".6" />
                      </svg>
                      {summary.map((s) => <span key={s}>{s}</span>)}
                    </SummaryItems>
                  </td>
                  <td>0.97</td>
                  <td />
                </Summary>
              </tfoot>
            </Orders>
            <TermTabs>
              {termTabs.map(([t, n]) => (
                <TermTab key={t} $active={t === "Trade"}>{t}{n && <Badge>{n}</Badge>}</TermTab>
              ))}
            </TermTabs>
          </TermBody>
        </Terminal>
      </Frame>
    </Desktop>
  );
}
